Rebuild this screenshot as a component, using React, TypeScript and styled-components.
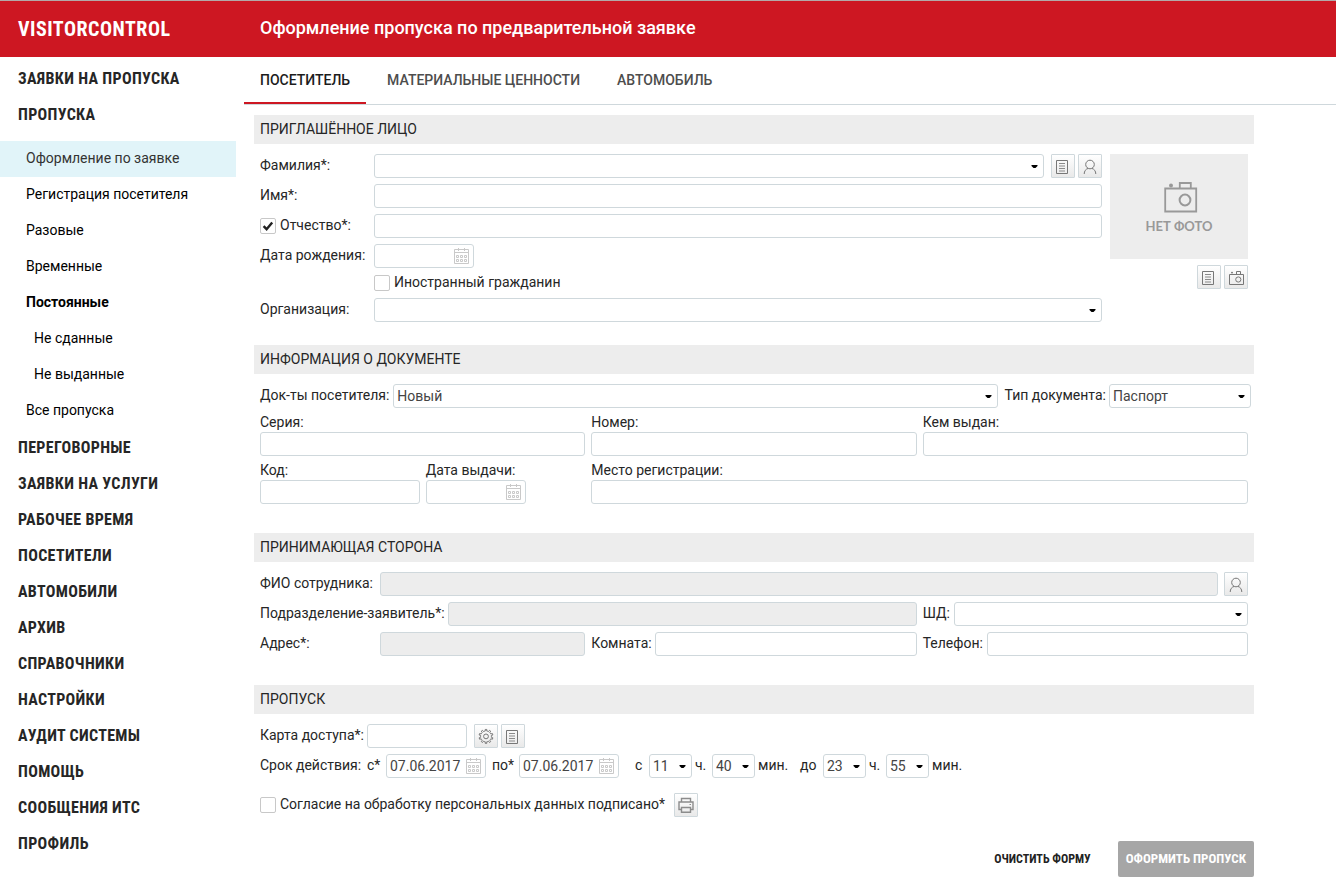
import React from 'react';
import styled, { createGlobalStyle, css } from 'styled-components';

const sans = "Roboto, 'Liberation Sans', sans-serif";
const condensed = "'Roboto Condensed', Roboto, 'Liberation Sans', sans-serif";
const line = '#cfd8dc';

const GlobalStyle = createGlobalStyle`
  *, *::before, *::after { box-sizing: border-box; }
  body {
    margin: 0;
    background: #fff;
    color: #262626;
    font-family: ${sans};
    font-size: 14px;
    line-height: 22px;
  }
  button, input, select { font: inherit; color: inherit; margin: 0; }
  a { color: inherit; text-decoration: none; }
`;

/* ---------- Page frame ---------- */

const Header = styled.header`
  display: flex;
  align-items: center;
  height: 57px;
  border-top: 1px solid #b3a9a9;
  background: #cd1722;
  color: #fff;
`;

const Brand = styled.a`
  width: 260px;
  padding-left: 18px;
  font: 700 20px/24px ${condensed};
  letter-spacing: 0.025em;
`;

const Title = styled.h1`
  margin: 0;
  padding-bottom: 2px;
  font-size: 18px;
  font-weight: 500;
  line-height: 24px;
`;

const Layout = styled.div`
  display: flex;
`;

const Sidebar = styled.nav`
  flex: none;
  width: 236px;
  padding-top: 3px;
`;

const NavList = styled.ul`
  list-style: none;
  margin: 0;
  padding: 0;
`;

const SubList = styled(NavList)`
  padding-top: 9px;
`;

const NavLink = styled.a`
  display: block;
  padding: 1px 0 0 18px;
  font: 700 16px/35px ${condensed};
  letter-spacing: 0.02em;
`;

const SubLink = styled.a<{ $active?: boolean; $strong?: boolean; $deep?: boolean }>`
  display: block;
  padding: 0 0 2px ${p => (p.$deep ? 34 : 26)}px;
  line-height: 34px;
  color: ${p => (p.$active ? '#333' : '#000')};
  font-weight: ${p => (p.$strong ? 700 : 400)};
  background: ${p => (p.$active ? '#e1f4f9' : 'transparent')};
`;

const Main = styled.main`
  flex: 1;
  min-width: 0;
  padding-left: 8px;
`;

const Tabs = styled.div`
  display: flex;
  gap: 5px;
  height: 48px;
  border-bottom: 1px solid ${line};
`;

const Tab = styled.button<{ $active?: boolean }>`
  padding: 0 16px;
  border: 0;
  border-bottom: 2px solid ${p => (p.$active ? '#cd1722' : 'transparent')};
  background: none;
  font-size: 14px;
  font-weight: 500;
  color: ${p => (p.$active ? '#1c1c1c' : '#4d4d4d')};
`;

/* ---------- Form ---------- */

const Form = styled.form`
  max-width: 1010px;
  padding: 10px 0 16px 10px;
`;

const Section = styled.section<{ $end?: number }>`
  padding-bottom: ${p => p.$end ?? 29}px;
`;

const SectionTitle = styled.h2`
  margin: 0 0 10px;
  padding: 0 6px;
  background: #ededed;
  font-size: 14px;
  font-weight: 400;
  line-height: 29px;
`;

const Rows = styled.div`
  display: flex;
  flex-direction: column;
  gap: 6px;
  padding: 0 6px;
`;

const Row = styled.div<{ $gap?: number }>`
  display: flex;
  align-items: flex-start;
  gap: ${p => p.$gap ?? 4}px;
  min-width: 0;
`;

const DocumentRow = styled(Row)`
  gap: 7px;
  padding: 0 3px 0 6px;
`;

const Grow = styled(Row)`
  flex: 1;
`;

const Label = styled.label<{ $width?: number }>`
  flex: none;
  width: ${p => (p.$width ? p.$width + 'px' : 'auto')};
  white-space: nowrap;
`;

const frame = css`
  height: 24px;
  border: 1px solid ${line};
  border-radius: 3px;
  background: #fff;
  color: #444;
`;

const TextInput = styled.input`
  ${frame}
  flex: 1;
  width: 100%;
  min-width: 0;
  padding: 0 3px;
  &:disabled { background: #ededed; }
`;

const ShortInput = styled(TextInput)`
  flex: none;
  width: 100px;
`;

const SelectBox = styled.div<{ $width?: number }>`
  position: relative;
  flex: ${p => (p.$width ? 'none' : 1)};
  width: ${p => (p.$width ? p.$width + 'px' : 'auto')};
  min-width: 0;
  svg {
    position: absolute;
    right: 6px;
    top: 11px;
    pointer-events: none;
  }
`;

const NativeSelect = styled.select`
  ${frame}
  display: block;
  appearance: none;
  width: 100%;
  padding: 0 14px 0 3px;
`;

const DateBox = styled.div`
  ${frame}
  display: flex;
  align-items: center;
  flex: none;
  width: 100px;
  padding-right: 4px;
  input {
    flex: 1;
    min-width: 0;
    padding: 0 0 0 3px;
    border: 0;
    background: none;
  }
  button {
    display: flex;
    padding: 0;
    border: 0;
    background: none;
  }
`;

const IconButton = styled.button`
  display: block;
  flex: none;
  width: 24px;
  height: 24px;
  padding: 0;
  border: 1px solid ${line};
  border-radius: 1px;
  background: linear-gradient(#fff, #e9e9e9);
  svg { display: block; }
`;

const ButtonPair = styled.div<{ $start?: number }>`
  display: flex;
  gap: 3px;
  padding-left: ${p => p.$start ?? 0}px;
`;

const CheckLabel = styled.label`
  display: flex;
  gap: 4px;
  white-space: nowrap;
`;

const Tick = styled.span`
  position: relative;
  width: 16px;
  height: 24px;
  input {
    display: block;
    appearance: none;
    width: 16px;
    height: 16px;
    margin-top: 4px;
    border: 1px solid #c8c8c8;
    border-radius: 2px;
    background: #fff;
  }
  svg {
    position: absolute;
    left: 0;
    top: 4px;
    visibility: hidden;
    pointer-events: none;
  }
  input:checked + svg { visibility: visible; }
`;

const Person = styled.div`
  display: flex;
  gap: 8px;
  padding: 0 6px;
`;

const PersonFields = styled.div`
  display: grid;
  flex: 1;
  grid-template-columns: 114px minmax(0, 1fr);
  row-gap: 6px;
  align-items: start;
`;

const ForeignRow = styled.div`
  display: flex;
  align-items: center;
  grid-column: 2;
  height: 18px;
`;

const PhotoColumn = styled.div`
  display: flex;
  flex-direction: column;
  align-items: flex-end;
  gap: 6px;
  width: 138px;
`;

const Photo = styled.div`
  display: flex;
  flex-direction: column;
  align-items: center;
  gap: 4px;
  width: 100%;
  height: 105px;
  padding-top: 27px;
  background: #ededed;
  color: #999;
  font: 700 13px/18px Lato, sans-serif;
  svg { margin-left: 3px; }
`;

const FieldGrid = styled.div`
  display: grid;
  grid-template-columns: repeat(6, minmax(0, 1fr));
  gap: 6px;
`;

const PaddedGrid = styled(FieldGrid)`
  padding: 6px 6px 0;
`;

const Cell = styled.div<{ $span: number }>`
  grid-column: span ${p => p.$span};
  min-width: 0;
`;

const Field = styled(Cell)`
  display: flex;
  flex-direction: column;
  gap: 2px;
  label { line-height: 16px; }
  ${TextInput}, ${DateBox} { flex: none; }
`;

const Period = styled(Row)`
  flex-wrap: wrap;
  gap: 3px;
`;

const Spacer = styled.span<{ $size?: number }>`
  padding-right: ${p => p.$size ?? 0}px;
`;

const Consent = styled(Row)`
  padding-top: 9px;
  gap: 9px;
`;

const Actions = styled.div`
  display: flex;
  justify-content: flex-end;
  gap: 19px;
`;

const ActionButton = styled.button<{ $primary?: boolean }>`
  height: 36px;
  padding: 0 8px;
  border: 0;
  border-radius: 2px;
  background: ${p => (p.$primary ? '#a6a6a6' : 'none')};
  color: ${p => (p.$primary ? '#fff' : '#222')};
  font: 700 ${p => (p.$primary ? 13 : 12)}px/36px ${condensed};
`;

/* ---------- Icons ---------- */

const Arrow = () => (
  <svg width="7" height="4" viewBox="0 0 7 4" aria-hidden="true">
    <path d="M.5 0H6.5V1L4.5 3H2.5L.5 1Z" fill="#000" />
  </svg>
);

const CheckMark = () => (
  <svg width="16" height="16" viewBox="0 0 16 16" aria-hidden="true">
    <path d="M3.6 8.2L6.6 11.2L12.2 4.4" fill="none" stroke="#222" strokeWidth="2.4" />
  </svg>
);

const CalendarIcon = () => (
  <svg width="15" height="16" viewBox="0 0 15 16" fill="none" stroke="#c9c9c9" aria-hidden="true">
    <path d="M.5 1.5H14.5V15.5H.5ZM.5 4.5H14.5M4.5 0V3M10.5 0V3" />
    <path d="M2.5 7.5h2v2h-2zM6.5 7.5h2v2h-2zM10.5 7.5h2v2h-2zM2.5 11.5h2v2h-2zM6.5 11.5h2v2h-2zM10.5 11.5h2v2h-2z" />
  </svg>
);

const Glyph = ({ children }: { children: React.ReactNode }) => (
  <svg width="22" height="22" viewBox="1 1 22 22" fill="none" stroke="#777" aria-hidden="true">
    {children}
  </svg>
);

const ListIcon = () => (
  <Glyph>
    <path d="M5.5 6.5H16.5V19.5H5.5Z" />
    <path d="M8 9.5H14M8 12H14M8 14.5H14M8 17H14" stroke="#8a8a8a" />
  </Glyph>
);

const PersonIcon = () => (
  <Glyph>
    <circle cx="12" cy="10.5" r="4.3" />
    <path d="M6.2 20C6.2 17.2 7.7 15 10.2 14.4M17.8 20C17.8 17.2 16.3 15 13.8 14.4" />
  </Glyph>
);

const CameraIcon = () => (
  <Glyph>
    <path d="M5.5 9.5H19.5V19.5H5.5ZM12.5 9.5V6.5H16.5V9.5" />
    <circle cx="14.3" cy="14.5" r="2.6" />
    <circle cx="8" cy="7.6" r=".9" fill="#6b6b6b" stroke="none" />
  </Glyph>
);

const gearPath = Array.from({ length: 10 }, (_, i) =>
  [[-0.5, 5.4], [-0.24, 5.4], [-0.17, 7], [0.17, 7], [0.24, 5.4]]
    .map(([o, r]) => {
      const a = ((i + o) * Math.PI) / 5;
      return `${(12 + r * Math.sin(a)).toFixed(2)} ${(12.4 - r * Math.cos(a)).toFixed(2)}`;
    })
    .join('L'),
).join('L');

const GearIcon = () => (
  <Glyph>
    <path d={`M${gearPath}Z`} />
    <circle cx="12" cy="12.4" r="2.4" />
  </Glyph>
);

const PrinterIcon = () => (
  <Glyph>
    <g stroke="#8c8c8c" strokeWidth="1.4">
      <path d="M7.5 9V5.5H16.5V9M7.5 16.5H5V9H19V16.5H16.5M7.5 14.5H16.5V19.3H7.5Z" />
      <path d="M15.5 11.5H17" strokeWidth="1" />
    </g>
  </Glyph>
);

const NoPhotoIcon = () => (
  <svg width="34" height="32" viewBox="0 0 34 32" fill="none" stroke="#999" aria-hidden="true">
    <path d="M1.2 7.5H32.2V30.5H1.2ZM15.8 7.5V2H26.8V7.5" strokeWidth="1.8" />
    <circle cx="21" cy="19" r="5.4" strokeWidth="2" />
    <circle cx="7" cy="4.4" r="2" fill="#999" stroke="none" />
  </svg>
);

/* ---------- Controls ---------- */

const Select = ({ id, width, value = '' }: { id: string; width?: number; value?: string }) => (
  <SelectBox $width={width}>
    <NativeSelect id={id} defaultValue={value}>
      <option>{value}</option>
    </NativeSelect>
    <Arrow />
  </SelectBox>
);

const DateInput = ({ id, value = '' }: { id: string; value?: string }) => (
  <DateBox>
    <input id={id} type="text" defaultValue={value} />
    <button type="button" aria-label="Календарь"><CalendarIcon /></button>
  </DateBox>
);

const Check = ({ id, checked, children }: { id: string; checked?: boolean; children: React.ReactNode }) => (
  <CheckLabel htmlFor={id}>
    <Tick>
      <input id={id} type="checkbox" defaultChecked={checked} />
      <CheckMark />
    </Tick>
    {children}
  </CheckLabel>
);

const subItems = [
  { text: 'Оформление по заявке', active: true },
  { text: 'Регистрация посетителя' },
  { text: 'Разовые' },
  { text: 'Временные' },
  { text: 'Постоянные', strong: true },
  { text: 'Не сданные', deep: true },
  { text: 'Не выданные', deep: true },
  { text: 'Все пропуска' },
];

const navItems = [
  'ЗАЯВКИ НА ПРОПУСКА', 'ПРОПУСКА', 'ПЕРЕГОВОРНЫЕ', 'ЗАЯВКИ НА УСЛУГИ', 'РАБОЧЕЕ ВРЕМЯ', 'ПОСЕТИТЕЛИ',
  'АВТОМОБИЛИ', 'АРХИВ', 'СПРАВОЧНИКИ', 'НАСТРОЙКИ', 'АУДИТ СИСТЕМЫ', 'ПОМОЩЬ', 'СООБЩЕНИЯ ИТС', 'ПРОФИЛЬ',
];

export default function App() {
  return (
    <>
      <GlobalStyle />
      <Header>
        <Brand href="#">VISITORCONTROL</Brand>
        <Title>Оформление пропуска по предварительной заявке</Title>
      </Header>
      <Layout>
        <Sidebar>
          <NavList>
            {navItems.map((text, i) => (
              <li key={text}>
                <NavLink href="#">{text}</NavLink>
                {i === 1 && (
                  <SubList>
                    {subItems.map(s => (
                      <li key={s.text}>
                        <SubLink href="#" $active={s.active} $strong={s.strong} $deep={s.deep}>{s.text}</SubLink>
                      </li>
                    ))}
                  </SubList>
                )}
              </li>
            ))}
          </NavList>
        </Sidebar>
        <Main>
          <Tabs role="tablist">
            <Tab type="button" role="tab" aria-selected $active>ПОСЕТИТЕЛЬ</Tab>
            <Tab type="button" role="tab">МАТЕРИАЛЬНЫЕ ЦЕННОСТИ</Tab>
            <Tab type="button" role="tab">АВТОМОБИЛЬ</Tab>
          </Tabs>
          <Form onSubmit={e => e.preventDefault()}>
            <Section $end={23}>
              <SectionTitle>ПРИГЛАШЁННОЕ ЛИЦО</SectionTitle>
              <Person>
                <PersonFields>
                  <Label htmlFor="surname">Фамилия*:</Label>
                  <Row $gap={7}>
                    <Select id="surname" />
                    <ButtonPair>
                      <IconButton type="button" aria-label="Список"><ListIcon /></IconButton>
                      <IconButton type="button" aria-label="Посетитель"><PersonIcon /></IconButton>
                    </ButtonPair>
                  </Row>
                  <Label htmlFor="name">Имя*:</Label>
                  <TextInput id="name" />
                  <Check id="has-patronymic" checked>Отчество*:</Check>
                  <TextInput id="patronymic" aria-label="Отчество" />
                  <Label htmlFor="birth">Дата рождения:</Label>
                  <DateInput id="birth" />
                  <ForeignRow><Check id="foreign">Иностранный гражданин</Check></ForeignRow>
                  <Label htmlFor="company">Организация:</Label>
                  <Select id="company" />
                </PersonFields>
                <PhotoColumn>
                  <Photo><NoPhotoIcon />НЕТ ФОТО</Photo>
                  <ButtonPair>
                    <IconButton type="button" aria-label="Выбрать фото"><ListIcon /></IconButton>
                    <IconButton type="button" aria-label="Сделать фото"><CameraIcon /></IconButton>
                  </ButtonPair>
                </PhotoColumn>
              </Person>
            </Section>

            <Section>
              <SectionTitle>ИНФОРМАЦИЯ О ДОКУМЕНТЕ</SectionTitle>
              <DocumentRow>
                <Grow>
                  <Label htmlFor="docs">Док-ты посетителя:</Label>
                  <Select id="docs" value="Новый" />
                </Grow>
                <Row $gap={3}>
                  <Label htmlFor="doc-type">Тип документа:</Label>
                  <Select id="doc-type" width={142} value="Паспорт" />
                </Row>
              </DocumentRow>
              <PaddedGrid>
                <Field $span={2}><label htmlFor="series">Серия:</label><TextInput id="series" /></Field>
                <Field $span={2}><label htmlFor="number">Номер:</label><TextInput id="number" /></Field>
                <Field $span={2}><label htmlFor="issuer">Кем выдан:</label><TextInput id="issuer" /></Field>
                <Field $span={1}><label htmlFor="code">Код:</label><TextInput id="code" /></Field>
                <Field $span={1}><label htmlFor="issued">Дата выдачи:</label><DateInput id="issued" /></Field>
                <Field $span={4}><label htmlFor="place">Место регистрации:</label><TextInput id="place" /></Field>
              </PaddedGrid>
            </Section>

            <Section>
              <SectionTitle>ПРИНИМАЮЩАЯ СТОРОНА</SectionTitle>
              <Rows>
                <Row $gap={6}>
                  <Label htmlFor="employee" $width={114}>ФИО сотрудника:</Label>
                  <TextInput id="employee" disabled />
                  <IconButton type="button" aria-label="Выбрать сотрудника"><PersonIcon /></IconButton>
                </Row>
                <FieldGrid>
                  <Cell $span={4}>
                    <Row $gap={3}>
                      <Label htmlFor="unit">Подразделение-заявитель*:</Label>
                      <TextInput id="unit" disabled />
                    </Row>
                  </Cell>
                  <Cell $span={2}>
                    <Row>
                      <Label htmlFor="shd">ШД:</Label>
                      <Select id="shd" />
                    </Row>
                  </Cell>
                  <Cell $span={2}>
                    <Row $gap={6}>
                      <Label htmlFor="address" $width={114}>Адрес*:</Label>
                      <TextInput id="address" disabled />
                    </Row>
                  </Cell>
                  <Cell $span={2}>
                    <Row $gap={3}>
                      <Label htmlFor="room">Комната:</Label>
                      <TextInput id="room" />
                    </Row>
                  </Cell>
                  <Cell $span={2}>
                    <Row>
                      <Label htmlFor="phone">Телефон:</Label>
                      <TextInput id="phone" />
                    </Row>
                  </Cell>
                </FieldGrid>
              </Rows>
            </Section>

            <Section $end={24}>
              <SectionTitle>ПРОПУСК</SectionTitle>
              <Rows>
                <Row $gap={3}>
                  <Label htmlFor="card" $width={104}>Карта доступа*:</Label>
                  <ShortInput id="card" />
                  <ButtonPair $start={4}>
                    <IconButton type="button" aria-label="Настройки карты"><GearIcon /></IconButton>
                    <IconButton type="button" aria-label="Список карт"><ListIcon /></IconButton>
                  </ButtonPair>
                </Row>
                <Period>
                  <Label as="span" $width={104}>Срок действия:</Label>
                  <Label htmlFor="from" $width={16}>с*</Label>
                  <DateInput id="from" value="07.06.2017" />
                  <Spacer />
                  <Label htmlFor="to" $width={24}>по*</Label>
                  <DateInput id="to" value="07.06.2017" />
                  <Spacer $size={10} />
                  <Label htmlFor="from-h" $width={11}>с</Label>
                  <Select id="from-h" width={43} value="11" />
                  <Label htmlFor="from-h" $width={14}>ч.</Label>
                  <Select id="from-m" width={43} value="40" />
                  <Label htmlFor="from-m" $width={39}>мин.</Label>
                  <Label htmlFor="to-h" $width={20}>до</Label>
                  <Select id="to-h" width={43} value="23" />
                  <Label htmlFor="to-h" $width={14}>ч.</Label>
                  <Select id="to-m" width={43} value="55" />
                  <Label htmlFor="to-m">мин.</Label>
                </Period>
                <Consent>
                  <Check id="consent">Согласие на обработку персональных данных подписано*</Check>
                  <IconButton type="button" aria-label="Печать"><PrinterIcon /></IconButton>
                </Consent>
              </Rows>
            </Section>

            <Actions>
              <ActionButton type="reset">ОЧИСТИТЬ ФОРМУ</ActionButton>
              <ActionButton type="submit" $primary>ОФОРМИТЬ ПРОПУСК</ActionButton>
            </Actions>
          </Form>
        </Main>
      </Layout>
    </>
  );
}
